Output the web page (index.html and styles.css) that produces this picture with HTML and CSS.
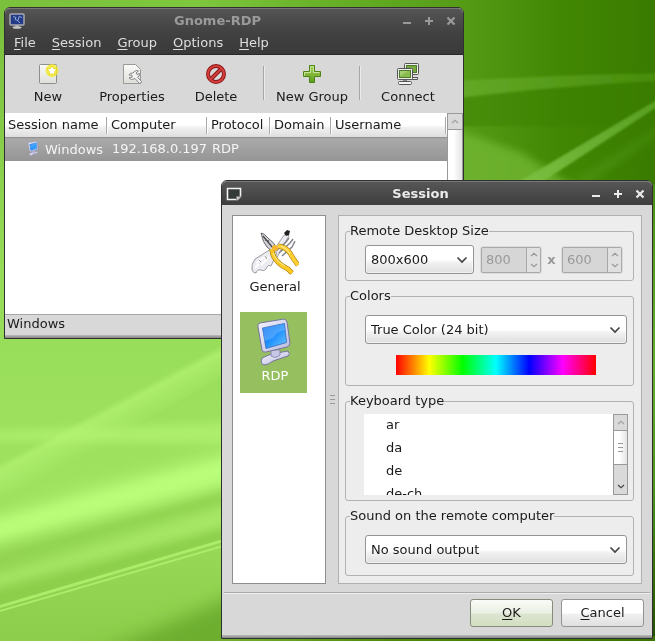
FILE: index.html
```html
<!DOCTYPE html>
<html lang="en">
<head>
<meta charset="utf-8">
<title>Gnome-RDP</title>
<link rel="stylesheet" href="styles.css">
</head>
<body>
<svg width="0" height="0" class="defs" aria-hidden="true">
  <defs>
    <linearGradient id="screen" x1="0" y1="0" x2="1" y2="1"><stop offset="0" stop-color="#0a68e8"/><stop offset=".5" stop-color="#2090ff"/><stop offset="1" stop-color="#6cc8ff"/></linearGradient>
    <linearGradient id="case" x1="0" y1="0" x2="1" y2="1"><stop offset="0" stop-color="#f4f4ff"/><stop offset="1" stop-color="#b9badc"/></linearGradient>
    <linearGradient id="plus" x1="0" y1="0" x2="0" y2="1"><stop offset="0" stop-color="#a9d45c"/><stop offset="1" stop-color="#5f9b1c"/></linearGradient>
    <linearGradient id="paper" x1="0" y1="0" x2="0" y2="1"><stop offset="0" stop-color="#fbfbf9"/><stop offset="1" stop-color="#dededa"/></linearGradient>
    <symbol id="monitor" viewBox="0 0 48 48">
      <path d="M11 40 Q9 46 13 47 Q17 47 22 43 L37 38 Q40 36 37 33 L20 36 Z" fill="url(#case)" stroke="#74749c"/>
      <path d="M20 32h9v5q-4 4-9 1z" fill="#c6c7e4" stroke="#7b7ba0" stroke-width=".8"/>
      <path d="M7 9 Q6 6 9 5 L33 1 Q35 1 36 4 L39 25 Q39 28 36 29 L15 34 Q12 35 11 32 Z" fill="url(#case)" stroke="#74749c"/>
      <path d="M11.500 10 L33.500 5.500 L35.500 24.500 L15 30.500 Z" fill="url(#screen)" stroke="#316bc0" stroke-width=".8"/>
      <path d="M12 10 L33 6 L34 12 Q25 14 22 20 L13.500 23 Z" fill="#8fc8ff" opacity=".38"/>
    </symbol>
    <symbol id="chevron" viewBox="0 0 12 8"><path d="M1.500 1.500 6 6 10.500 1.500" fill="none" stroke="currentColor" stroke-width="1.700"/></symbol>
    <symbol id="up" viewBox="0 0 8 5"><path d="M1 4 4 1.300 7 4" fill="none" stroke="currentColor" stroke-width="1.300"/></symbol>
    <symbol id="down" viewBox="0 0 8 5"><path d="M1 1 4 3.700 7 1" fill="none" stroke="currentColor" stroke-width="1.300"/></symbol>
    <symbol id="min" viewBox="0 0 10 10"><path d="M1 7h8" fill="none" stroke="currentColor" stroke-width="2"/></symbol>
    <symbol id="max" viewBox="0 0 10 10"><path d="M1 5h8M5 1v8" fill="none" stroke="currentColor" stroke-width="2"/></symbol>
    <symbol id="close" viewBox="0 0 10 10"><path d="M1.500 1.500 8.500 8.500M8.500 1.500 1.500 8.500" fill="none" stroke="currentColor" stroke-width="2.200"/></symbol>
  </defs>
</svg>

<svg class="wallpaper" viewBox="0 0 655 641" preserveAspectRatio="none" aria-hidden="true">
  <defs>
    <linearGradient id="sky" x1="0" y1="0" x2="1" y2="0">
      <stop offset="0" stop-color="#7bc03c"/><stop offset=".3" stop-color="#7ec63e"/><stop offset=".5" stop-color="#68b028"/><stop offset=".7" stop-color="#569c17"/><stop offset=".85" stop-color="#438804"/><stop offset="1" stop-color="#397b00"/>
    </linearGradient>
    <linearGradient id="meadow" x1="0" y1="0" x2="0" y2="1"><stop offset="0" stop-color="#96dc57" stop-opacity="0"/><stop offset=".4" stop-color="#96dc57"/><stop offset=".75" stop-color="#9fe260"/><stop offset="1" stop-color="#8ccd4b"/></linearGradient>
    <linearGradient id="ray" gradientUnits="userSpaceOnUse" x1="110" y1="404" x2="126" y2="434"><stop offset="0" stop-color="#b2f272" stop-opacity="0"/><stop offset=".2" stop-color="#b2f272" stop-opacity=".75"/><stop offset="1" stop-color="#b2f272" stop-opacity="0"/></linearGradient>
    <linearGradient id="band" x1="0" y1="0" x2="1" y2="0"><stop offset="0" stop-color="#67ac29"/><stop offset="1" stop-color="#468a0a"/></linearGradient>
    <linearGradient id="beam" x1="0" y1="1" x2="1" y2="0"><stop offset="0" stop-color="#7fc343"/><stop offset="1" stop-color="#569d20"/></linearGradient>
    <linearGradient id="edge" x1="0" y1="0" x2="0" y2="1"><stop offset="0" stop-color="#4a9010"/><stop offset=".4" stop-color="#64ad28"/><stop offset=".65" stop-color="#4f951b"/><stop offset="1" stop-color="#245000"/></linearGradient>
    <linearGradient id="foot" x1="0" y1="0" x2="1" y2="0"><stop offset="0" stop-color="#70b230"/><stop offset=".4" stop-color="#4a8a0c"/><stop offset="1" stop-color="#3a7600"/></linearGradient>
    <filter id="soft" x="-20%" y="-60%" width="140%" height="220%"><feGaussianBlur stdDeviation="9"/></filter>
    <filter id="mid" x="-20%" y="-40%" width="140%" height="180%"><feGaussianBlur stdDeviation="4"/></filter>
    <filter id="fine" x="-20%" y="-20%" width="140%" height="140%"><feGaussianBlur stdDeviation="1"/></filter>
  </defs>
  <rect width="655" height="641" fill="url(#sky)"/>
  <rect y="20" width="260" height="621" fill="url(#meadow)"/>
  <path d="M0 464 L230 332 L230 372 L0 504Z" fill="url(#ray)"/>
  <path d="M-20 432 L250 422 L250 444 L-20 440Z" fill="#b6f775" opacity=".65" filter="url(#mid)"/>
  <path d="M-30 524 L260 446 L260 476 L-30 548Z" fill="#bcff7c" filter="url(#soft)"/>
  <path d="M-30 530 L260 452 L260 466 L-30 545Z" fill="#baff7a" opacity=".5" filter="url(#mid)"/>
  <path d="M-30 564 L260 480 L260 494 L-30 568Z" fill="#86c944" opacity=".55" filter="url(#mid)"/>
  <path d="M-30 582 L260 498 L260 516 L-30 594Z" fill="#aeef6d" opacity=".6" filter="url(#mid)"/>
  <path d="M-30 604 L260 520 L260 530 L-30 611Z" fill="#84c741" opacity=".7" filter="url(#mid)"/>
  <path d="M60 670 L270 580 L270 670Z" fill="#68a92a" opacity=".85" filter="url(#soft)"/>
  <path d="M0 605 L230 537 L230 540 L0 608Z M0 610 L230 543 L230 545 L0 612Z" fill="#b4f474" opacity=".75"/>
  <path d="M440 82 Q560 74 670 73 L670 81 Q560 86 440 101Z" fill="url(#band)" filter="url(#fine)"/>
  <path d="M440 100 Q560 85 670 80 L670 126 L440 126Z" fill="#3b7f02" opacity=".45" filter="url(#fine)"/>
  <path d="M440 124 L520 152 L580 190 L440 190Z" fill="#74b934" opacity=".75" filter="url(#mid)"/>
  <path d="M505 190 L660 98 L660 105 L530 190Z" fill="url(#beam)" filter="url(#fine)"/>
  <path d="M560 190 L660 126 L660 132 L580 190Z" fill="#5ba423" opacity=".4" filter="url(#mid)"/>
  <rect x="651" y="184" width="4" height="457" fill="url(#edge)"/>
  <rect x="221" y="636" width="434" height="5" fill="url(#foot)"/>
</svg>

<main class="desktop">
  <section class="window window-main" aria-label="Gnome-RDP">
    <header class="titlebar inactive">
      <svg class="app-icon" viewBox="0 0 16 16" aria-hidden="true"><rect x="1" y="1" width="14" height="11" rx="1" fill="#243c85" stroke="#a8a8b0" stroke-width="1.500"/><path d="M4 3.500l3 1-1 2 3 1 1-4 3 1M8 7l3 3" stroke="#8ca2d8" fill="none"/><path d="M6.500 12h3v2h-3z" fill="#aaa"/><ellipse cx="8" cy="14.500" rx="4.500" ry="1.300" fill="#c6c6c6"/></svg>
      <h1>Gnome-RDP</h1>
      <div class="controls">
        <button type="button" aria-label="Minimize"><svg><use href="#min"/></svg></button>
        <button type="button" aria-label="Maximize"><svg><use href="#max"/></svg></button>
        <button type="button" aria-label="Close"><svg><use href="#close"/></svg></button>
      </div>
    </header>
    <nav class="menubar">
      <button type="button"><u>F</u>ile</button>
      <button type="button"><u>S</u>ession</button>
      <button type="button"><u>G</u>roup</button>
      <button type="button"><u>O</u>ptions</button>
      <button type="button"><u>H</u>elp</button>
    </nav>
    <div class="toolbar">
      <button type="button">
        <svg viewBox="0 0 24 24" aria-hidden="true"><rect x="3.500" y="2.500" width="17" height="19" rx="1" fill="url(#paper)" stroke="#8d8f8a"/><circle cx="16" cy="8.500" r="6.500" fill="#f4ea2c" opacity=".8"/><path d="M16 3.500l1.600 3 3.300.700-2.300 2.500.4 3.300-3-1.300-3 1.300.4-3.300-2.300-2.500 3.300-.700z" fill="#fff" stroke="#e3d600" stroke-width=".8"/></svg>
        New</button>
      <button type="button">
        <svg viewBox="0 0 24 24" aria-hidden="true"><path d="M3.500 2.500h12l5 5v14h-17z" fill="url(#paper)" stroke="#999b96"/><path d="M15 9q2-1 3.500 0l-2.500 2 1 1.500 2.500-1q.2 3-2 3.800l4 4.200q0 2-2 2l-4.500-5q-4 2.500-6-.500l3-.800v-2l-3-.200q1-2.500 4-2z" fill="#f2f2f2" stroke="#858585"/></svg>
        Properties</button>
      <button type="button">
        <svg viewBox="0 0 24 24" aria-hidden="true"><circle cx="12" cy="12" r="8" fill="none" stroke="#8f1010" stroke-width="4"/><path d="M6.500 17.500l11-11" stroke="#8f1010" stroke-width="4"/><circle cx="12" cy="12" r="8" fill="none" stroke="#cf3f3f" stroke-width="2.200"/><path d="M6.500 17.500l11-11" stroke="#cf3f3f" stroke-width="2.200"/></svg>
        Delete</button>
      <span class="separator"></span>
      <button type="button">
        <svg viewBox="0 0 24 24" aria-hidden="true"><path d="M9.500 3.500h5v6h6v5h-6v6h-5v-6h-6v-5h6z" fill="url(#plus)" stroke="#4b8210"/><path d="M4.500 13.500v-3h6v-6h3v6h6" fill="none" stroke="#c7e695"/></svg>
        New Group</button>
      <span class="separator"></span>
      <button type="button">
        <svg viewBox="0 0 24 24" aria-hidden="true"><path d="M14 15.500h7.500v2H14z" fill="#eee" stroke="#555"/><rect x="8.500" y="1.500" width="14" height="11" rx="1" fill="#eee" stroke="#555"/><rect x="10.500" y="3.500" width="10" height="7" fill="#77aa40" stroke="#50782a"/><rect x="1.500" y="6.500" width="15" height="11" rx="1" fill="#eee" stroke="#555"/><rect x="3.500" y="8.500" width="11" height="7" fill="#8abb50" stroke="#50782a"/><path d="M4 9l8 0-8 5z" fill="#a5cd74"/><path d="M7 18h4v2H7z" fill="#888"/><rect x="2.500" y="19.500" width="13" height="3" rx="1" fill="#f4f4f4" stroke="#555"/></svg>
        Connect</button>
    </div>
    <div class="list-area">
      <table class="sessions">
        <colgroup><col class="c-name"><col class="c-host"><col class="c-proto"><col class="c-domain"><col></colgroup>
        <thead><tr><th>Session name</th><th>Computer</th><th>Protocol</th><th>Domain</th><th>Username</th></tr></thead>
        <tbody><tr><td class="name"><svg aria-hidden="true"><use href="#monitor"/></svg>Windows</td><td>192.168.0.197</td><td>RDP</td><td></td><td></td></tr></tbody>
      </table>
      <div class="scrollbar" aria-hidden="true">
        <span class="step faint"><svg><use href="#up"/></svg></span>
        <span class="thumb full"></span>
      </div>
    </div>
    <footer class="statusbar">Windows</footer>
  </section>

  <section class="window window-dialog" role="dialog" aria-label="Session">
    <header class="titlebar">
      <svg class="app-icon" viewBox="0 0 16 16" aria-hidden="true"><path d="M1.500 2.500h13v8l-3 3h-10z" fill="#343a38" stroke="#f2f2f2" stroke-width="1.600"/><path d="M10.500 14v-3.500h4.500z" fill="#d8d8d0" stroke="#777" stroke-width=".6"/></svg>
      <h2>Session</h2>
      <div class="controls">
        <button type="button" aria-label="Minimize"><svg><use href="#min"/></svg></button>
        <button type="button" aria-label="Maximize"><svg><use href="#max"/></svg></button>
        <button type="button" aria-label="Close"><svg><use href="#close"/></svg></button>
      </div>
    </header>
    <form>
      <div class="dialog-body">
        <div class="pages">
          <button type="button">
            <svg viewBox="0 0 48 48" aria-hidden="true">
              <path d="M18 28 31 9q2-4 5-4l2 2-3 5-11 20z" fill="#ececf2" stroke="#8a8a92" stroke-width=".8"/>
              <path d="M33 4l3-3 3 1-1 4-3 1z" fill="#222"/>
              <path d="M1 41q-1-6 3-11l16-10 6 4-6 13q-3-2-4 1-2 5-6 3-4-1-5 3-3 0-4-3z" fill="#ebebf1" stroke="#85858d" stroke-width=".8"/>
              <path d="M5 34l10-7M10 36l8-8M4 39l4-4" stroke="#fff" stroke-width="2"/>
              <path d="M8 31l2 2M14 27l2 3" stroke="#999" stroke-width="1"/>
              <path d="M25 22 35 13 38 9M28 24 39 14 42 10M31 27 41 18 44 12" fill="none" stroke="#808088" stroke-width="1.400"/>
              <path d="M10 4q3 0 7 5 7 5 9 11l-4 3-6-5q-4-4-6-14z" fill="#d2d2d8" stroke="#5b5b60" stroke-width=".9"/>
              <path d="M12 7 22 19M14 11l4 1" stroke="#444" stroke-width="1.200"/>
              <path d="M21 20q0 6 4 11 5 6 12 9l4 4" fill="none" stroke="#a87808" stroke-width="5"/>
              <path d="M27 17q8 1 12 7 3 6 8 12" fill="none" stroke="#a87808" stroke-width="5"/>
              <path d="M21 20q0 6 4 11 5 6 12 9l4 4" fill="none" stroke="#fbc926" stroke-width="3.800"/>
              <path d="M27 17q8 1 12 7 3 6 8 12" fill="none" stroke="#ffd033" stroke-width="3.800"/>
              <path d="M22 24q3 8 12 13M30 17q6 2 9 8" fill="none" stroke="#fff0a0" stroke-width="1"/>
              <circle cx="24" cy="19" r="3" fill="#f6b62d"/>
            </svg>
            General</button>
          <button type="button" class="selected"><svg aria-hidden="true"><use href="#monitor"/></svg>RDP</button>
        </div>
        <div class="grip" aria-hidden="true"><i></i><i></i><i></i></div>
        <div class="panel">
          <fieldset class="size-group">
            <legend>Remote Desktop Size</legend>
            <div class="combo short"><select aria-label="Desktop size"><option>800x600</option></select><svg aria-hidden="true"><use href="#chevron"/></svg></div>
            <div class="spin"><input type="number" aria-label="Width" value="800" disabled><span><svg><use href="#up"/></svg><svg><use href="#down"/></svg></span></div>
            <b>x</b>
            <div class="spin"><input type="number" aria-label="Height" value="600" disabled><span><svg><use href="#up"/></svg><svg><use href="#down"/></svg></span></div>
          </fieldset>
          <fieldset class="wide-group">
            <legend>Colors</legend>
            <div class="combo"><select aria-label="Colors"><option>True Color (24 bit)</option></select><svg aria-hidden="true"><use href="#chevron"/></svg></div>
            <div class="spectrum"></div>
          </fieldset>
          <fieldset class="keyboard-group">
            <legend>Keyboard type</legend>
            <div class="listbox">
              <select size="4" aria-label="Keyboard type"><option>ar</option><option>da</option><option>de</option><option>de-ch</option></select>
              <div class="scrollbar" aria-hidden="true">
                <span class="step faint"><svg><use href="#up"/></svg></span>
                <span class="thumb"><i></i><i></i><i></i></span>
                <span class="step end"><svg><use href="#down"/></svg></span>
              </div>
            </div>
          </fieldset>
          <fieldset class="wide-group">
            <legend>Sound on the remote computer</legend>
            <div class="combo"><select aria-label="Sound on the remote computer"><option>No sound output</option></select><svg aria-hidden="true"><use href="#chevron"/></svg></div>
          </fieldset>
        </div>
      </div>
      <footer class="actions">
        <button type="button" class="default"><span><u>O</u>K</span></button>
        <button type="button"><span><u>C</u>ancel</span></button>
      </footer>
    </form>
  </section>
</main>
</body>
</html>
```
FILE: styles.css
```css
* { box-sizing: border-box; }
body {
  margin: 0;
  min-height: 100vh;
  overflow: hidden;
  background: #86cc44;
  color: #1a1a1a;
  font: 13px/16px "DejaVu Sans", sans-serif;
}
button, input, select { font: inherit; color: inherit; }
button { border: 0; padding: 0; background: none; }
u { text-decoration: underline; text-underline-offset: 2px; }
.defs { position: absolute; }
.wallpaper { position: fixed; inset: 0; width: 100%; height: 100%; }
.desktop { position: relative; min-height: 100vh; }

/* Windows */
.window {
  position: absolute;
  border: 1px solid #303030;
  border-radius: 6px 6px 0 0;
  background: #d8d8d8;
}
.window::after {
  content: "";
  display: block;
  height: 3px;
  background: linear-gradient(#bcbcbc, #858585);
}
.window-main { left: 4px; top: 7px; width: 460px; }
.window-dialog { left: 221px; top: 180px; width: 432px; }

.titlebar {
  display: grid;
  grid-template-columns: 34px 1fr 66px;
  align-items: center;
  height: 24px;
  padding-right: 1px;
  border-radius: 5px 5px 0 0;
  border-top: 1px solid #777;
  background: linear-gradient(#565656, #3e3e3e);
  color: #ececec;
}
.titlebar.inactive { color: #9a9a9a; background: linear-gradient(#545454, #424242); }
.titlebar h1, .titlebar h2 { margin: 0; font-size: 13px; line-height: 16px; text-align: center; }
.app-icon { width: 16px; height: 16px; margin-left: 4px; }
.controls { display: grid; grid-template-columns: repeat(3, 22px); }
.controls button { display: grid; place-items: center; height: 16px; }
.controls svg { width: 10px; height: 10px; }

.menubar {
  display: flex;
  height: 23px;
  padding-left: 1px;
  border-bottom: 1px solid #292929;
  background: linear-gradient(#424242, #393939);
  color: #dedede;
}
.menubar button { padding: 0 8px; }

.toolbar { display: flex; height: 58px; padding: 7px 0 0 1px; }
.toolbar button {
  display: flex;
  flex-direction: column;
  align-items: center;
  gap: 3px;
  width: 84px;
  height: 43px;
  white-space: nowrap;
}
.toolbar svg { width: 24px; height: 24px; flex: none; }
.separator { width: 12px; height: 34px; margin-top: 4px; }
.separator::before {
  content: "";
  display: block;
  width: 2px;
  height: 100%;
  margin: 0 auto;
  background: linear-gradient(90deg, #a6a6a6 50%, #ebebeb 50%);
}

.list-area { display: grid; grid-template-columns: 1fr 16px; align-items: start; min-height: 201px; background: #fff; }
.sessions { width: 100%; table-layout: fixed; border-collapse: collapse; }
.c-name { width: 103px; }
.c-host { width: 100px; }
.c-proto { width: 63px; }
.c-domain { width: 61px; }
.sessions th, .sessions td { height: 24px; padding: 0 3px; font-weight: normal; text-align: left; white-space: nowrap; }
.sessions th {
  background:
    linear-gradient(90deg, #a8a8a8 50%, #fff 50%) right 4px / 2px 17px no-repeat,
    linear-gradient(#fff 50%, #f1f1f1 60%, #dedede);
}
.sessions td { padding-left: 4px; }
.sessions tbody tr { background: linear-gradient(#8c8c8c, #aaa 2px, #959595); color: #f4f4f4; }
.sessions td.name { padding-left: 21px; padding-right: 0; }
.name svg { width: 15px; height: 15px; margin-right: 4px; vertical-align: -2px; }

.scrollbar { display: flex; flex-direction: column; align-self: stretch; border: 1px solid #999; background: #d9d9d9; color: #4a4a4a; }
.step { display: grid; place-items: center; height: 15px; flex: none; }
.step svg { width: 8px; height: 5px; }
.step.faint { color: #a2a2a2; }
.step.end { margin-top: auto; }
.thumb {
  display: flex;
  flex-direction: column;
  align-items: center;
  justify-content: center;
  gap: 3px;
  height: 35px;
  border-block: 1px solid #999;
  background: linear-gradient(90deg, #fff 40%, #e4e4e4);
}
.thumb.full { flex: 1; }
.thumb i, .grip i { width: 5px; height: 1px; background: #999; }

.statusbar { height: 21px; padding: 1px 2px; border-top: 1px solid #a6a6a6; }

/* Session dialog */
.dialog-body { display: grid; grid-template-columns: 94px 12px 1fr; padding: 10px 10px 8px; }
.pages {
  display: flex;
  flex-direction: column;
  gap: 8px;
  align-items: flex-start;
  padding: 7px;
  border: 1px solid #8e8e8e;
  background: #fff;
}
.pages button { display: flex; flex-direction: column; align-items: center; gap: 2px; width: 67px; height: 81px; padding: 6px 0 0 3px; }
.pages svg { width: 48px; height: 48px; flex: none; }
.pages .selected { background: #96bf60; color: #fff; }
.grip { display: flex; flex-direction: column; align-items: center; justify-content: center; gap: 3px; }
.panel {
  display: flex;
  flex-direction: column;
  gap: 7px;
  padding: 7px 7px 7px 6px;
  border: 1px solid #b0b0b0;
  background: #ededed;
}
fieldset {
  min-width: 0;
  margin: 0;
  padding: 0 6px 0 19px;
  border: 1px solid #b2b2b2;
  border-radius: 3px;
}
legend { margin-left: -15px; padding: 0; }
.size-group { display: flex; align-items: center; gap: 7px; padding-block: 6px; color: #999; }
.size-group legend, .size-group .combo { color: #1a1a1a; }
.size-group b { width: 7px; display: flex; justify-content: center; }
.wide-group { padding-block: 11px; }
.keyboard-group { padding: 5px 5px 5px 18px; }
.keyboard-group legend { margin-left: -14px; }

.combo { display: grid; align-items: center; }
.combo.short { width: 109px; }
.combo select, .combo svg { grid-area: 1 / 1; }
.combo select {
  appearance: none;
  width: 100%;
  height: 29px;
  padding: 0 24px 0 5px;
  border: 1px solid #949494;
  border-radius: 3px;
  background: linear-gradient(#fff 50%, #f2f2f2 60%, #dfdfdf);
  box-shadow: inset 0 0 0 1px #fff8;
}
.combo svg { justify-self: end; width: 12px; height: 8px; margin-right: 6px; color: #444; pointer-events: none; }

.spin { display: grid; grid-template-columns: 1fr 14px; width: 60px; height: 26px; border: 1px solid #a9a9a9; border-radius: 2px; background: #d6d6d6; box-shadow: 0 0 0 1px #dcdcdc; }
.spin input { appearance: textfield; min-width: 0; padding: 0 4px; border: 0; background: none; }
.spin input::-webkit-inner-spin-button { appearance: none; margin: 0; }
.spin span { display: flex; flex-direction: column; align-items: center; justify-content: space-between; padding: 4px 0; border-left: 1px solid #a9a9a9; background: #e0e0e0; }
.spin span svg { width: 8px; height: 5px; }

.spectrum {
  height: 20px;
  margin: 11px 31px 0;
  background: linear-gradient(90deg, #f00, #ff0, #0f0, #0ff, #00f, #f0f, #f00);
}
.wide-group:has(.spectrum) { padding-bottom: 10px; }

.listbox { display: grid; grid-template-columns: 1fr 15px; height: 81px; }
.listbox select { height: 81px; padding: 0; border: 0; border-radius: 0; outline: 0; background: #fff; overflow: hidden; scrollbar-width: none; }
.listbox option { min-height: 23px; padding: 3px 22px 4px; line-height: 16px; }

.actions { display: flex; justify-content: flex-end; gap: 8px; margin: 0 2px; padding: 6px 6px 8px; border-top: 1px solid #aaa; box-shadow: inset 0 1px #eee; }
.actions button {
  width: 83px;
  height: 28px;
  border: 1px solid #949494;
  border-radius: 3px;
  background: linear-gradient(#fff 50%, #f0f0f0 55%, #dfdfdf);
}
.actions .default { border-color: #868c7c; background: linear-gradient(#fafbf8, #e9efe2 50%, #dbe4cf 55%, #d2dfc1); }
```
